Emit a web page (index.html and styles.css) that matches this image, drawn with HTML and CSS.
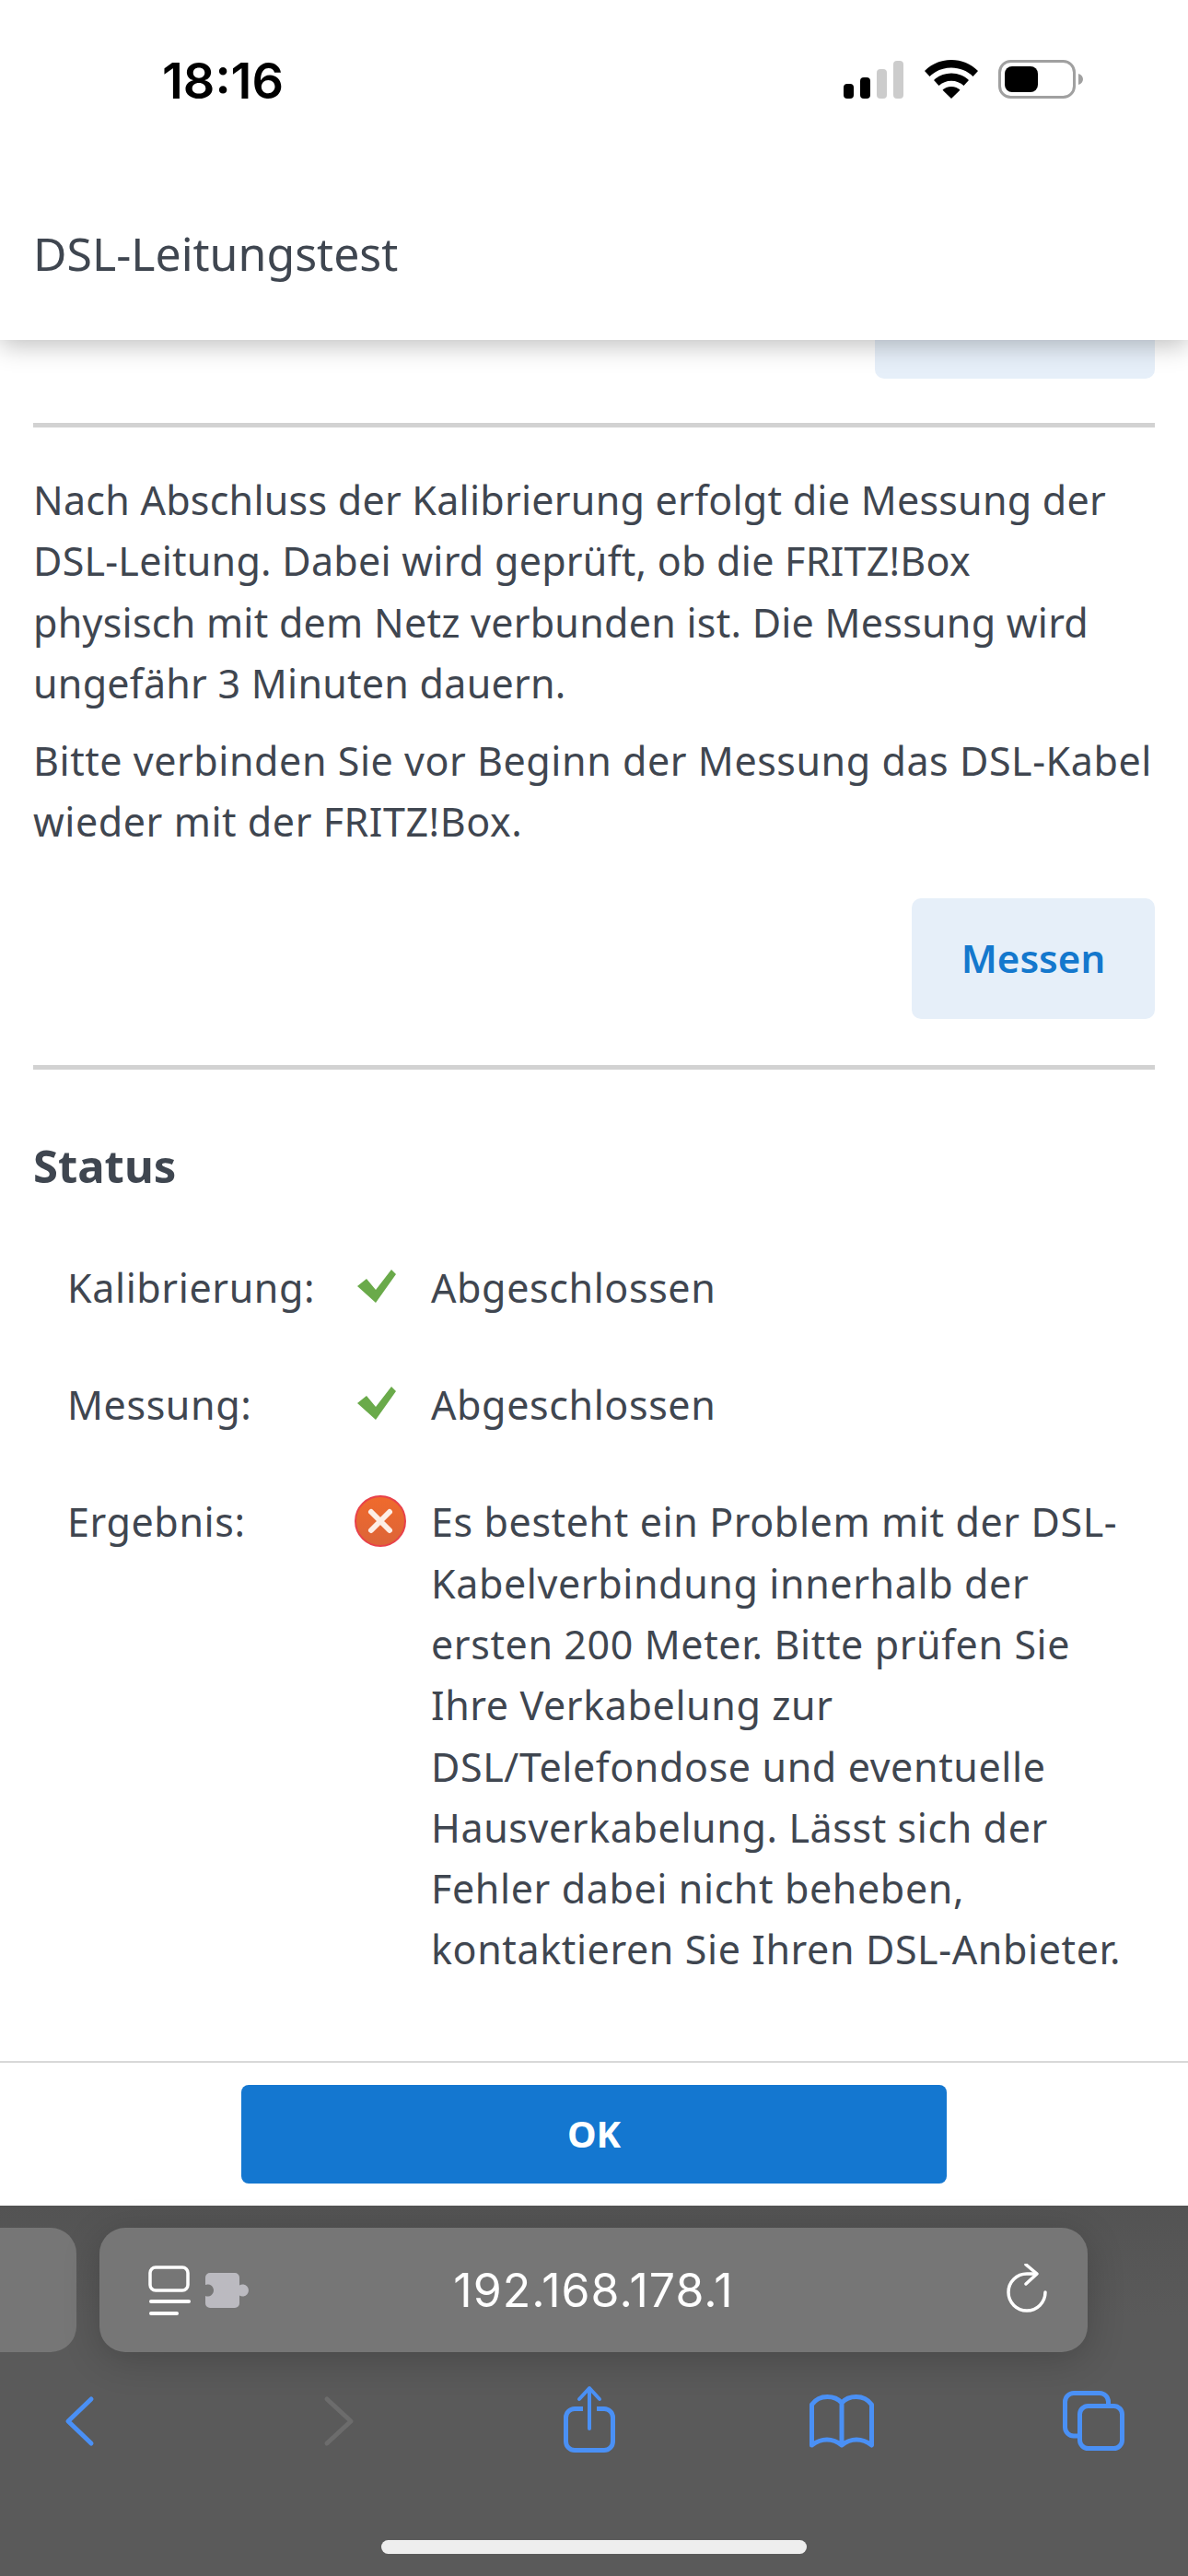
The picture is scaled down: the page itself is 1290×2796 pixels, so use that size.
FILE: index.html
```html
<!DOCTYPE html>
<html>
<head>
    <meta charset="UTF-8">
    <title>DSL-Leitungstest</title>
    <link rel="stylesheet" href="styles.css">
</head>
<body>

<div id="phone">
    <div id="top">
        <div class="statusbar">
            <span class="clock">18:16</span>
            <div class="status-icons">
                <svg width="65" height="41" viewBox="0 0 65 41">
                    <rect x="0" y="25" width="11" height="16" rx="4" fill="#000"/>
                    <rect x="18" y="18" width="11" height="23" rx="4" fill="#000"/>
                    <rect x="36" y="9" width="11" height="32" rx="4" fill="#ccc"/>
                    <rect x="54" y="0" width="11" height="41" rx="4" fill="#ccc"/>
                </svg>
                <svg class="wifi" width="58" height="42" viewBox="0 0 58 42">
                    <path d="M29 0C18 0 8 4 0 12l5.500 6C11.500 12 20 8.500 29 8.500S46.500 12 52.500 18L58 12C50 4 40 0 29 0z" fill="#000"/>
                    <path d="M29 14.500c-7.500 0-14 2.800-19 7.500l5.500 6c3.500-3.300 8.300-5.300 13.500-5.300s10 2 13.500 5.300l5.500-6c-5-4.700-11.500-7.500-19-7.500z" fill="#000"/>
                    <path d="M29 29c-3.900 0-7.200 1.400-9.500 3.700L29 42l9.500-9.300C36.200 30.400 32.900 29 29 29z" fill="#000"/>
                </svg>
                <svg class="battery" width="93" height="42" viewBox="0 0 93 42">
                    <rect x="1.500" y="1.500" width="81" height="39" rx="12" fill="none" stroke="#a0a0a0" stroke-width="3"/>
                    <rect x="7" y="7" width="36" height="28" rx="8" fill="#000"/>
                    <path d="M87 15c3.500 1 5 3.500 5 6s-1.500 5-5 6z" fill="#a0a0a0"/>
                </svg>
            </div>
        </div>
        <h1>DSL-Leitungstest</h1>
    </div>

    <div id="content">
        <div class="btn-row"><span class="btn btn-cut"></span></div>
        <div class="divider first"></div>

        <p>Nach Abschluss der Kalibrierung erfolgt die Messung der<br>DSL-Leitung. Dabei wird geprüft, ob die FRITZ!Box<br>physisch mit dem Netz verbunden ist. Die Messung wird<br>ungefähr 3 Minuten dauern.</p>
        <p class="second">Bitte verbinden Sie vor Beginn der Messung das DSL-Kabel wieder mit der FRITZ!Box.</p>

        <div class="btn-row"><a href="javascript:;" class="btn">Messen</a></div>
        <div class="divider"></div>

        <h2>Status</h2>

        <div class="status">
            <div class="label">Kalibrierung:</div>
            <div class="icon">
                <svg width="42" height="36" viewBox="0 0 42 36"><path d="M0 18L10 10L20 22L37 0L42 5L20 36Z" fill="#6aaa4a"/></svg>
            </div>
            <div class="value">Abgeschlossen</div>

            <div class="label">Messung:</div>
            <div class="icon">
                <svg width="42" height="36" viewBox="0 0 42 36"><path d="M0 18L10 10L20 22L37 0L42 5L20 36Z" fill="#6aaa4a"/></svg>
            </div>
            <div class="value">Abgeschlossen</div>

            <div class="label">Ergebnis:</div>
            <div class="icon icon-err">
                <svg width="56" height="56" viewBox="0 0 56 56">
                    <defs>
                        <linearGradient id="errFill" x1="0" y1="0" x2="0" y2="1">
                            <stop offset="0" stop-color="#f06a2c"/>
                            <stop offset="1" stop-color="#dc6438"/>
                        </linearGradient>
                    </defs>
                    <circle cx="28" cy="28" r="27" fill="url(#errFill)" stroke="#e8414a" stroke-width="2"/>
                    <path d="M18 18l20 20M38 18L18 38" stroke="#fdeee6" stroke-width="6" stroke-linecap="round"/>
                </svg>
            </div>
            <div class="value">Es besteht ein Problem mit der DSL-Kabelverbindung innerhalb der ersten 200 Meter. Bitte prüfen Sie Ihre Verkabelung zur DSL/Telefondose und eventuelle Hausverkabelung. Lässt sich der Fehler dabei nicht beheben, kontaktieren Sie Ihren DSL-Anbieter.</div>
        </div>
    </div>

    <div id="footer">
        <a href="javascript:;" class="ok">OK</a>
    </div>

    <div id="safari">
        <div class="url-row">
            <div class="prev-tab"></div>
            <div class="url">
                <div class="url-left">
                    <svg width="46" height="58" viewBox="0 0 46 58">
                        <rect x="2" y="2" width="41" height="25" rx="6" fill="none" stroke="#fff" stroke-width="3.500"/>
                        <rect x="1" y="37" width="45" height="4" rx="2" fill="#fff"/>
                        <rect x="1" y="50" width="32" height="4" rx="2" fill="#fff"/>
                    </svg>
                    <svg class="puzzle" width="48" height="38" viewBox="0 0 48 38">
                        <path d="M5 0H32a5 5 0 0 1 5 5V13.500a6.500 6.500 0 1 1 0 11V33a5 5 0 0 1-5 5H5a5 5 0 0 1-5-5V25a6.500 6.500 0 1 0 0-12V5a5 5 0 0 1 5-5z" fill="#bbbac0"/>
                    </svg>
                </div>
                <span class="address">192.168.178.1</span>
                <svg class="reload" width="46" height="54" viewBox="0 0 46 54">
                    <path d="M42 31A20 20 0 1 1 22 11H32" fill="none" stroke="#fff" stroke-width="3.500" stroke-linecap="round"/>
                    <path d="M21 1L33 11L21 22" fill="none" stroke="#fff" stroke-width="3.500" stroke-linecap="round" stroke-linejoin="round"/>
                </svg>
            </div>
        </div>

        <div class="tools">
            <svg width="80" height="80" viewBox="0 0 80 80">
                <path d="M53 18L28 42L53 66" fill="none" stroke="#4a90f5" stroke-width="5" stroke-linecap="round" stroke-linejoin="round"/>
            </svg>
            <svg width="80" height="80" viewBox="0 0 80 80">
                <path d="M34 18L60 42L34 66" fill="none" stroke="#6c6c6c" stroke-width="5" stroke-linecap="round" stroke-linejoin="round"/>
            </svg>
            <svg width="80" height="80" viewBox="0 0 80 80">
                <path d="M36 28.500H27a9.500 9.500 0 0 0-9.500 9.500V64a9.500 9.500 0 0 0 9.500 9.500H59a9.500 9.500 0 0 0 9.500-9.500V38a9.500 9.500 0 0 0-9.500-9.500H51" fill="none" stroke="#4a90f5" stroke-width="5"/>
                <path d="M43 50V7M32 18L43 6L54 18" fill="none" stroke="#4a90f5" stroke-width="4" stroke-linecap="round" stroke-linejoin="round"/>
            </svg>
            <svg width="80" height="80" viewBox="0 0 80 80">
                <path d="M42 22C35 14 18 12 9.500 24V68C20 60 32 60 42 68C52 60 64 60 74.500 68V24C66 12 49 14 42 22ZM42 22V68" fill="none" stroke="#4a90f5" stroke-width="5" stroke-linejoin="round"/>
            </svg>
            <svg width="80" height="80" viewBox="0 0 80 80">
                <rect x="25.500" y="25.500" width="46" height="46" rx="9" fill="none" stroke="#4a90f5" stroke-width="5"/>
                <path d="M23 58H19a9.500 9.500 0 0 1-9.500-9.500V21a9.500 9.500 0 0 1 9.500-9.500H47a9.500 9.500 0 0 1 9.500 9.500V25" fill="none" stroke="#4a90f5" stroke-width="5"/>
            </svg>
        </div>
        <div class="home"></div>
    </div>
</div>

</body>
</html>
```

FILE: styles.css
```css
* {
    margin: 0;
    padding: 0;
    box-sizing: border-box;
    text-decoration: none;
}

body {
    width: 1290px;
    height: 2796px;
    overflow: hidden;
    background: #fff;
    font-family: "Noto Sans", "Open Sans", sans-serif;
    color: #3f4650;
}

#phone {
    height: 2796px;
    display: flex;
    flex-direction: column;
}

/* top */
#top {
    height: 369px;
    background: #fff;
    box-shadow: 0 6px 26px rgba(0, 0, 0, .25);
    position: relative;
    z-index: 2;
}

.statusbar {
    height: 176px;
    padding: 60px 113px 0 176px;
    display: flex;
    justify-content: space-between;
    align-items: flex-start;
}

.clock {
    font-family: Inter, sans-serif;
    font-size: 54px;
    font-weight: 600;
    line-height: 56px;
    color: #000;
}

.status-icons {
    display: flex;
    align-items: flex-end;
    height: 47px;
}

.wifi {
    margin-left: 23px;
}

.battery {
    margin-left: 22px;
}

h1 {
    padding-left: 36px;
    font-size: 50px;
    font-weight: 400;
    line-height: 66px;
    margin-top: 66px;
}

/* content */
#content {
    flex: 1;
    overflow: hidden;
    padding: 0 36px;
    font-size: 43px;
    line-height: 66.300px;
    letter-spacing: .25px;
}

.btn-row {
    display: flex;
    justify-content: flex-end;
}

.btn {
    display: block;
    width: 264px;
    height: 131px;
    line-height: 129px;
    text-align: center;
    border-radius: 10px;
    background: #e6eff9;
    color: #1478cd;
    font-size: 42px;
    font-weight: 600;
    letter-spacing: 0;
}

.btn-cut {
    width: 304px;
    height: 42px;
    border-radius: 0 0 10px 10px;
}

.divider {
    height: 5px;
    background: #d2d2d2;
    margin-top: 50px;
}

.divider.first {
    margin-top: 48px;
    margin-bottom: 46px;
}

.second {
    margin-top: 18px;
    margin-bottom: 49px;
    letter-spacing: .55px;
}

h2 {
    font-size: 49px;
    font-weight: 700;
    line-height: 66px;
    margin-top: 71px;
    letter-spacing: 0;
}

.status {
    display: grid;
    grid-template-columns: 313px 82px 1fr;
    row-gap: 61px;
    padding-left: 37px;
    margin-top: 67px;
    letter-spacing: .6px;
}

.icon {
    padding-top: 13px;
}

.icon svg {
    display: block;
    margin-left: 2px;
}

.icon-err {
    padding-top: 4px;
}

.icon-err svg {
    margin-left: -1px;
}

.value {
    width: 760px;
}

/* footer */
#footer {
    height: 157px;
    border-top: 2px solid #d8d8d8;
    padding-top: 24px;
    background: #fff;
}

.ok {
    display: block;
    width: 766px;
    height: 107px;
    margin: 0 auto;
    line-height: 105px;
    text-align: center;
    border-radius: 8px;
    background: #1477d0;
    color: #fff;
    font-size: 40px;
    font-weight: 700;
}

/* safari bar */
#safari {
    height: 402px;
    background: linear-gradient(#535353, #5a5a5a 30%);
    padding-top: 24px;
}

.url-row {
    display: flex;
    gap: 25px;
}

.prev-tab {
    width: 83px;
    height: 135px;
    background: #767676;
    border-radius: 0 28px 28px 0;
}

.url {
    width: 1073px;
    height: 135px;
    background: #767676;
    border-radius: 28px;
    box-shadow: 0 8px 40px rgba(0, 0, 0, .2);
    display: grid;
    grid-template-columns: 1fr auto 1fr;
    align-items: center;
    padding: 0 42px;
}

.url-left {
    display: flex;
    align-items: flex-start;
    margin: 5px 0 0 11px;
}

.puzzle {
    margin-left: 16px;
    margin-top: 8px;
}

.address {
    font-family: Inter, sans-serif;
    font-size: 50px;
    font-weight: 400;
    line-height: 56px;
    letter-spacing: 1px;
    color: #fff;
}

.reload {
    justify-self: end;
    margin-bottom: 3px;
}

.tools {
    display: flex;
    justify-content: space-between;
    padding: 33px 63px 0 46px;
}

.home {
    width: 462px;
    height: 15px;
    margin: 91px 0 0 414px;
    border-radius: 8px;
    background: #eee;
}
```
